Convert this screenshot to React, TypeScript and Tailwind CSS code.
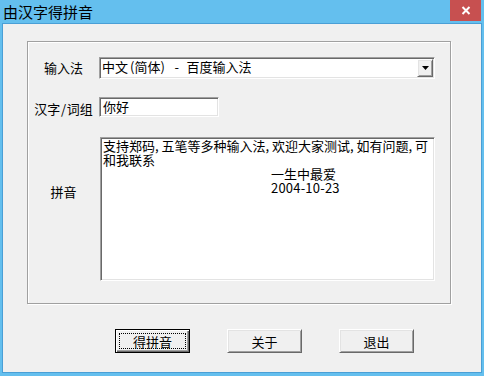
import React from "react";

const F = "font-['Noto_Sans_CJK_SC',sans-serif]";

function H({ c, align = "text-center" }: { c: string; align?: string }) {
  return <span className={`inline-block w-[6.5px] ${align}`}>{c}</span>;
}

const sunken =
  "border border-t-[#a0a0a0] border-l-[#a0a0a0] border-r-white border-b-white shadow-[inset_1px_1px_0_#696969,inset_-1px_-1px_0_#e3e3e3]";
const raised =
  "border border-t-white border-l-white border-r-[#696969] border-b-[#696969] shadow-[inset_1px_1px_0_#e3e3e3,inset_-1px_-1px_0_#a0a0a0] bg-[#f0f0f0]";

export default function App() {
  return (
    <div className={`w-[484px] h-[376px] bg-[#64bfee] flex flex-col ${F} text-black`}>
      {/* title bar */}
      <div className="h-[23px] flex items-start shrink-0">
        <div className="pl-[3px] pt-[3px] text-[15px] leading-[17px]">由汉字得拼音</div>
        <div className="ml-auto mr-[3px] w-[31px] h-[21px] bg-[#c75050] flex items-center justify-center">
          <svg width="10" height="9" viewBox="0 0 10 9">
            <path d="M1.5 1 L8.5 8 M8.5 1 L1.5 8" stroke="white" strokeWidth="2" fill="none" />
          </svg>
        </div>
      </div>

      {/* client area */}
      <div className="mx-[2px] mb-[3px] flex-1 border border-[#4a9fd6] bg-[#f0f0f0] flex flex-col pl-[24px] pt-[17px] text-[13px] leading-[13px]">
        {/* group box */}
        <div className="w-[424px] h-[263px] border border-[#a0a0a0] shadow-[inset_1px_1px_0_#fff,1px_1px_0_#fff] flex flex-col pl-[2px]">
          {/* row 1 */}
          <div className="flex items-start mt-[15px]">
            <div className="w-[67px] text-center mt-[4px]">输入法</div>
            <div className={`ml-[2px] w-[336px] h-[22px] bg-white ${sunken} flex items-stretch p-[1px]`}>
              <div className="flex-1 pl-[1px] pt-[1px] whitespace-nowrap">
                中文<H c="(" align="text-right" />简体<H c=")" align="text-left" />
                <H c=" " />
                <H c="-" />
                <H c=" " />
                百度输入法
              </div>
              <div className={`w-[16px] ${raised} flex items-center justify-center`}>
                <svg width="7" height="4" viewBox="0 0 7 4">
                  <polygon points="0,0 7,0 3.5,4" fill="black" />
                </svg>
              </div>
            </div>
          </div>

          {/* row 2 */}
          <div className="flex items-start mt-[18px]">
            <div className="w-[67px] text-center mt-[5px] whitespace-nowrap">
              汉字<H c="/" />词组
            </div>
            <div className={`ml-[2px] w-[120px] h-[20px] bg-white ${sunken} pl-[3px] pt-[2px]`}>你好</div>
          </div>

          {/* row 3 */}
          <div className="flex items-start mt-[20px]">
            <div className="w-[67px] text-center mt-[48px]">拼音</div>
            <div className={`ml-[3px] w-[335px] h-[144px] bg-white ${sunken} pl-[2px] pt-[1px] leading-[14px]`}>
              <div className="whitespace-nowrap">
                支持郑码<H c="," align="text-left" />五笔等多种输入法<H c="," align="text-left" />欢迎大家测试<H c="," align="text-left" />如有问题<H c="," align="text-left" />可
              </div>
              <div className="whitespace-nowrap">和我联系</div>
              <div className="whitespace-nowrap pl-[168px]">一生中最爱</div>
              <div className="whitespace-nowrap pl-[168px] tracking-[0.2px]">2004-10-23</div>
            </div>
          </div>
        </div>

        {/* buttons */}
        <div className="flex mt-[25px] ml-[88px] gap-[37px]">
          <div className="w-[75px] h-[24px] border border-black bg-[#f0f0f0] shadow-[inset_1px_1px_0_#fff,inset_-1px_-1px_0_#696969,inset_-2px_-2px_0_#a0a0a0] p-[3px] flex">
            <div className="flex-1 border border-dotted border-black flex items-center justify-center">得拼音</div>
          </div>
          <div className={`w-[75px] h-[24px] ${raised} flex items-center justify-center`}>关于</div>
          <div className={`w-[75px] h-[24px] ${raised} flex items-center justify-center`}>退出</div>
        </div>
      </div>
    </div>
  );
}
